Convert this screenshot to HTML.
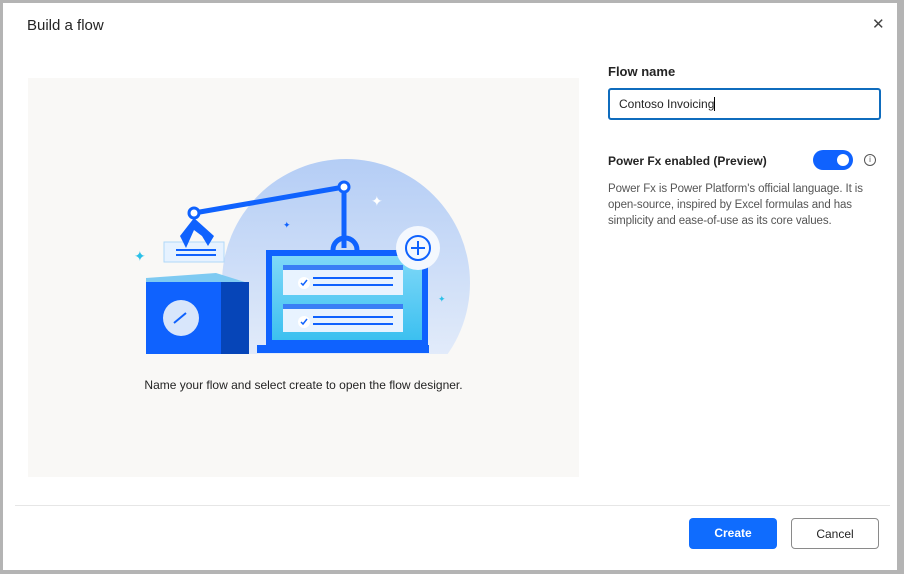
<!DOCTYPE html>
<html><head><style>
body{margin:0;width:904px;height:574px;background:#b4b4b4;font-family:"Liberation Sans",sans-serif;position:relative;overflow:hidden}
.d{position:absolute;left:3px;top:3px;width:894px;height:567px;background:#fff}
.t{position:absolute;left:27px;top:17px;font-size:15px;color:#242424}
.x{position:absolute;left:872px;top:15px;font-size:15px;color:#444}
.p{position:absolute;left:28px;top:78px;width:551px;height:399px;background:#f9f8f6}
.cap{position:absolute;left:0;width:551px;top:300px;text-align:center;font-size:12px;color:#242424}
.fl{position:absolute;left:608px;top:64px;font-size:13px;font-weight:bold;color:#242424}
.in{position:absolute;left:608px;top:88px;height:28px;border:2px solid #0f6cbd;border-radius:3px;font-size:12px;line-height:29px;padding-left:9px;box-sizing:content-box;width:260px;color:#242424}
.pf{position:absolute;left:608px;top:154px;font-size:12px;font-weight:bold;color:#242424}
.tg{position:absolute;left:813px;top:150px;width:40px;height:20px;border-radius:10px;background:#0f62fe}
.tg:after{content:"";position:absolute;right:4px;top:4px;width:12px;height:12px;border-radius:50%;background:#fff}
.info{position:absolute;left:864px;top:154px;width:10px;height:10px;border:1px solid #555;border-radius:50%;font-size:8px;text-align:center;line-height:10px;color:#555}
.desc{position:absolute;left:608px;top:181px;width:275px;font-size:11.5px;line-height:16px;color:#555;letter-spacing:-0.1px}
.hr{position:absolute;left:15px;top:505px;width:875px;height:1px;background:#e6e6e6}
.b{position:absolute;top:518px;height:31px;border-radius:4px;font-size:12px;text-align:center;line-height:31px;box-sizing:border-box}
</style></head><body>
<div class="d"></div>
<div class="t">Build a flow</div>
<div class="x">✕</div>
<div class="p">
<svg width="551" height="300" viewBox="0 0 551 300" style="position:absolute;left:0;top:0">
<defs><linearGradient id="g" x1="0" y1="0" x2="0" y2="1"><stop offset="0" stop-color="#b4cdf5"/><stop offset="1" stop-color="#eef3fb"/></linearGradient>
<linearGradient id="s" x1="0" y1="0" x2="0" y2="1"><stop offset="0" stop-color="#7fd8f8"/><stop offset="1" stop-color="#3cc0f0"/></linearGradient>
<clipPath id="c"><rect x="0" y="0" width="551" height="276"/></clipPath></defs>
<circle cx="318" cy="205" r="124" fill="url(#g)" clip-path="url(#c)"/>
<line x1="166" y1="135" x2="316" y2="109" stroke="#0f62fe" stroke-width="5"/>
<line x1="316" y1="109" x2="316" y2="170" stroke="#0f62fe" stroke-width="5"/>
<circle cx="316" cy="109" r="5" fill="#fff" stroke="#0f62fe" stroke-width="3"/>
<circle cx="166" cy="135" r="5" fill="#fff" stroke="#0f62fe" stroke-width="3"/>
<rect x="136" y="164" width="60" height="20" fill="#e6f2ff" stroke="#b0d8f8"/>
<line x1="148" y1="172" x2="188" y2="172" stroke="#0f62fe" stroke-width="2"/>
<line x1="148" y1="177" x2="188" y2="177" stroke="#0f62fe" stroke-width="2"/>
<path d="M166 140 L152 158 L158 170 L166 152 L174 158 L180 168 L186 158 Z" fill="#0f62fe"/>
<path d="M118 200 L188 195 L220 205 L118 205Z" fill="#7ecaf2"/>
<rect x="118" y="204" width="75" height="72" fill="#0f62fe"/>
<rect x="193" y="204" width="28" height="72" fill="#0645b8"/>
<circle cx="153" cy="240" r="18" fill="#d8e6fb"/>
<path d="M146 245 l12 -10" stroke="#0f62fe" stroke-width="2"/>
<path d="M305 172 a12 12 0 0 1 24 0" stroke="#0f62fe" stroke-width="5" fill="none"/>
<rect x="238" y="172" width="162" height="95" fill="#0f62fe"/>
<rect x="244" y="178" width="150" height="84" fill="url(#s)"/>
<rect x="229" y="267" width="172" height="8" fill="#0f62fe"/>
<rect x="255" y="187" width="120" height="30" fill="#e8f3ff"/><rect x="255" y="187" width="120" height="5" fill="#3a7ef5"/>
<circle cx="276" cy="205" r="6" fill="#fff"/><path d="M273 205 l2 2 4 -5" stroke="#0f62fe" stroke-width="1.5" fill="none"/>
<line x1="285" y1="200" x2="365" y2="200" stroke="#0f62fe" stroke-width="2"/><line x1="285" y1="207" x2="365" y2="207" stroke="#0f62fe" stroke-width="2"/>
<rect x="255" y="226" width="120" height="28" fill="#e8f3ff"/><rect x="255" y="226" width="120" height="5" fill="#3a7ef5"/>
<circle cx="276" cy="244" r="6" fill="#fff"/><path d="M273 244 l2 2 4 -5" stroke="#0f62fe" stroke-width="1.5" fill="none"/>
<line x1="285" y1="239" x2="365" y2="239" stroke="#0f62fe" stroke-width="2"/><line x1="285" y1="246" x2="365" y2="246" stroke="#0f62fe" stroke-width="2"/>
<circle cx="390" cy="170" r="22" fill="#f4f8fe"/><circle cx="390" cy="170" r="12" fill="none" stroke="#0f62fe" stroke-width="2"/>
<path d="M383 170 h14 M390 163 v14" stroke="#0f62fe" stroke-width="2"/>
<text x="106" y="183" fill="#2bc0e8" font-size="14">✦</text><text x="343" y="128" fill="#fff" font-size="14">✦</text>
<text x="255" y="150" fill="#0f62fe" font-size="9">✦</text><text x="410" y="224" fill="#2bc0e8" font-size="9">✦</text>
</svg>
<div class="cap">Name your flow and select create to open the flow designer.</div>
</div>
<div class="fl">Flow name</div>
<div class="in">Contoso Invoicing <span style="border-left:1px solid #000"></span></div>
<div class="pf">Power Fx enabled (Preview)</div>
<div class="tg"></div>
<div class="info">i</div>
<div class="desc">Power Fx is Power Platform's official language. It is open-source, inspired by Excel formulas and has simplicity and ease-of-use as its core values.</div>
<div class="hr"></div>
<div class="b" style="left:689px;width:88px;background:#0f6cfe;color:#fff;font-weight:bold">Create</div>
<div class="b" style="left:791px;width:88px;border:1px solid #8a8a8a;color:#242424">Cancel</div>
</body></html>
